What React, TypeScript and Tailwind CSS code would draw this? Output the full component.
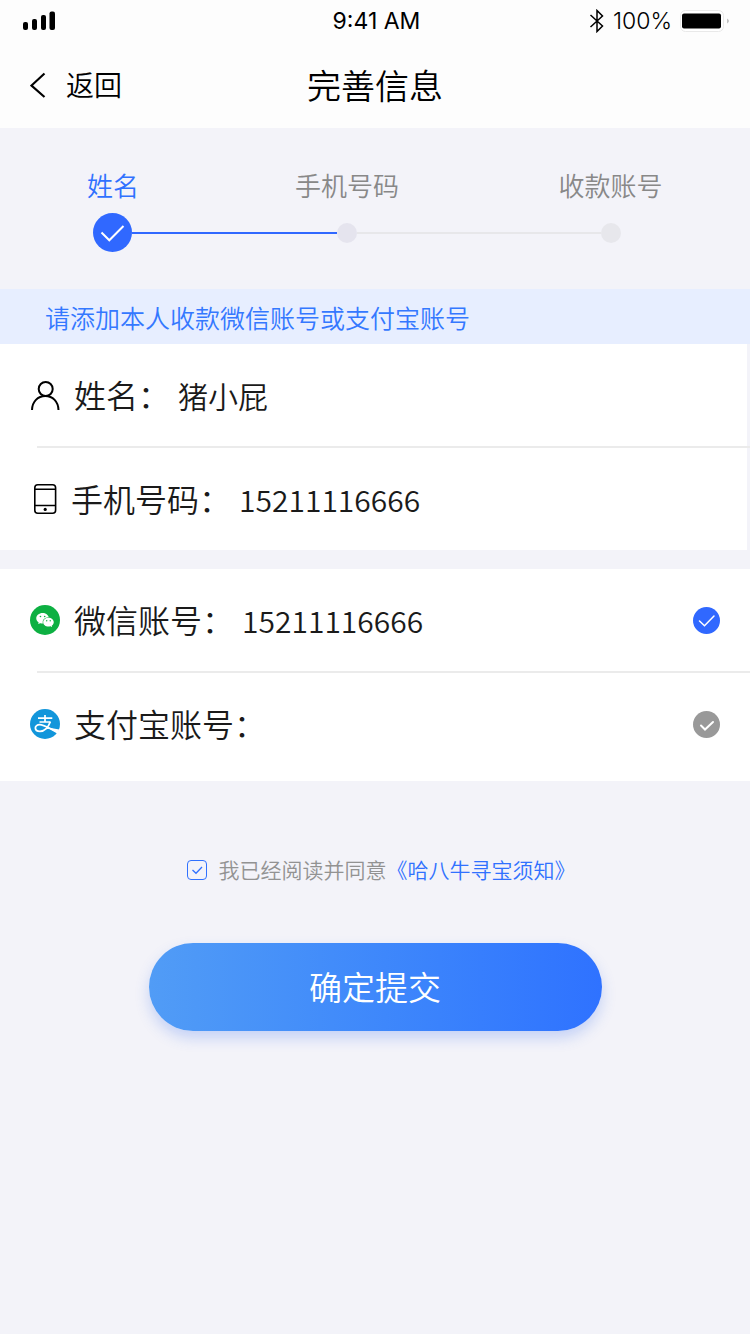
import { useState } from "react";
import type { ReactNode } from "react";
import { AiFillWechat } from "react-icons/ai";

const steps = ["姓名", "手机号码", "收款账号"];

function SignalIcon() {
  return (
    <svg className="h-5 w-8" viewBox="0 0 32 20" aria-hidden="true">
      <rect x="0" y="11" width="5" height="8" rx="2" />
      <rect x="9" y="8" width="5" height="11" rx="2" />
      <rect x="18" y="4" width="5" height="15" rx="2" />
      <rect x="26.5" y="0.5" width="5.5" height="18.5" rx="2" />
    </svg>
  );
}

function BluetoothIcon() {
  return (
    <svg className="h-6 w-4" viewBox="0 0 16 24" fill="none" stroke="black" strokeWidth="1.5" aria-hidden="true">
      <path d="M1.5 6 13.5 17 8 22.5V1.5L13.5 7 1.5 18" />
    </svg>
  );
}

function BatteryIcon() {
  return (
    <svg className="h-6 w-[50px]" viewBox="0 0 50 24" aria-hidden="true">
      <rect x="0.5" y="1.5" width="43" height="21" rx="5" fill="white" stroke="#e9e9e9" />
      <rect x="2" y="4.500" width="39" height="15" rx="2" />
      <path d="M47.500 9.500v5q2-2.500 0-5Z" fill="#888" />
    </svg>
  );
}

function PersonIcon() {
  return (
    <svg className="size-[30px] shrink-0" viewBox="0 0 30 30" fill="none" stroke="black" strokeWidth="2" aria-hidden="true">
      <circle cx="15.700" cy="9" r="7" />
      <path d="M2 30.500C2 21.500 8 16 15.300 16S28.500 21.500 28.500 30.500" />
    </svg>
  );
}

function PhoneIcon() {
  return (
    <svg className="h-[30px] w-[27px] shrink-0" viewBox="0 0 27 30" fill="none" stroke="black" strokeWidth="1.6" aria-hidden="true">
      <rect x="4.800" y="0.800" width="20.800" height="28.400" rx="3" />
      <path d="M4.800 5.200H25.600M4.800 21.500H25.600" />
      <circle cx="15.200" cy="25.400" r="1.600" fill="black" stroke="none" />
    </svg>
  );
}

function WechatIcon() {
  return (
    <span className="flex size-[30px] shrink-0 items-center justify-center rounded-full bg-[#0db042] text-white">
      <AiFillWechat className="size-5" aria-hidden="true" />
    </span>
  );
}

function AlipayIcon() {
  return (
    <svg className="size-[30px] shrink-0" viewBox="0 0 30 30" fill="none" stroke="white" aria-hidden="true">
      <circle cx="15" cy="15" r="15" fill="#1296db" stroke="none" />
      <path d="M8 9.200H22.300M9.500 13H20.500M15 6V13" strokeWidth="1.700" />
      <path
        d="M20.300 12.800C18.500 18 14.500 22.300 10 22.300C7 22.300 5.400 20.800 5.400 19C5.400 17 7.200 15.700 9.700 15.700C13.500 15.700 17 18.200 28.500 23.500"
        strokeWidth="1.800"
      />
      <path d="M16.500 18.300 29.300 20.500Q28.800 22.500 27.500 24.800Z" fill="white" stroke="none" />
    </svg>
  );
}

type FieldProps = {
  id: string;
  label: string;
  icon: ReactNode;
  type?: string;
  defaultValue?: string;
  children?: ReactNode;
};

function Field({ id, label, icon, type = "text", defaultValue = "", children }: FieldProps) {
  return (
    <div className="flex h-[102px] items-center px-[30px]">
      {icon}
      <div className="ml-3.5 flex min-w-0 flex-1 items-baseline gap-2 pb-0.5">
        <label htmlFor={id} className="shrink-0 text-[32px] leading-[48px]">
          {label}：
        </label>
        <input
          id={id}
          type={type}
          defaultValue={defaultValue}
          className="h-12 min-w-0 flex-1 bg-transparent text-[30px] outline-none"
        />
      </div>
      {children}
    </div>
  );
}

function AccountRadio({ label, checked, onSelect }: { label: string; checked: boolean; onSelect: () => void }) {
  return (
    <span className="grid size-[27px] shrink-0">
      <input
        type="radio"
        name="account"
        aria-label={label}
        checked={checked}
        onChange={onSelect}
        className="col-start-1 row-start-1 size-[27px] appearance-none rounded-full bg-[#999999] checked:bg-[#3068ff]"
      />
      <svg
        className="pointer-events-none col-start-1 row-start-1 size-[27px]"
        viewBox="0 0 27 27"
        fill="none"
        stroke="white"
        strokeLinecap="round"
        strokeWidth={checked ? 1.5 : 2}
        aria-hidden="true"
      >
        <path d={checked ? "M6.500 14 11.500 18.800 21 9" : "M8 14.500 12 18.500 20 11"} />
      </svg>
    </span>
  );
}

export default function App() {
  const [account, setAccount] = useState("wechat");
  const [agreed, setAgreed] = useState(true);

  return (
    <div className="min-h-screen bg-[#f3f3f9] font-['Noto_Sans_CJK_SC',sans-serif] font-[350] text-[#1a1a1a]">
      <header className="h-32 bg-[#fdfdfd] text-black">
        <div className="grid h-[42px] grid-cols-3 items-center pl-[23px] pr-5 font-['Inter',sans-serif] text-[23px]">
          <SignalIcon />
          <span className="text-center font-normal">9:41 AM</span>
          <div className="flex items-center justify-end gap-2">
            <BluetoothIcon />
            <span className="font-light">100%</span>
            <BatteryIcon />
          </div>
        </div>
        <div className="grid h-[86px] grid-cols-3 items-center px-[30px]">
          <button type="button" className="flex items-center gap-5 text-[28px]">
            <svg className="h-[26px] w-4" viewBox="0 0 16 26" fill="none" stroke="black" strokeWidth="2.200" aria-hidden="true">
              <path d="M14.500 1.500 1.500 13.500 14.500 25" />
            </svg>
            <span className="pb-0.5">返回</span>
          </button>
          <h1 className="pb-0.5 text-center text-[34px]">完善信息</h1>
        </div>
      </header>

      <main>
        <section aria-label="进度" className="pb-[37px] pt-[39px]">
          <ol className="grid grid-cols-[220fr_248fr_279fr] pl-[3px] text-center text-[26px] leading-9 text-[#888888]">
            {steps.map((step, i) => (
              <li key={step} className={i === 0 ? "text-[#3071ff]" : ""}>
                {step}
              </li>
            ))}
          </ol>
          <div className="mt-2.5 flex items-center pl-[93px] pr-[129px]" aria-hidden="true">
            <svg className="size-[39px]" viewBox="0 0 39 39" fill="none">
              <circle cx="19.500" cy="19.500" r="19.500" fill="#3068ff" />
              <path d="M8.500 19.500 16.300 27.300 30.500 13" stroke="white" strokeWidth="2" />
            </svg>
            <div className="h-0.5 flex-[205] bg-[#3068ff]" />
            <div className="size-5 rounded-full bg-[#e5e4ee]" />
            <div className="h-0.5 flex-[244] bg-[#e7e7ea]" />
            <div className="size-5 rounded-full bg-[#e7e7ec]" />
          </div>
        </section>

        <p className="flex h-[55px] items-center bg-[#e7eeff] pl-[45px] pt-0.5 text-[25px] text-[#3478ff]">
          请添加本人收款微信账号或支付宝账号
        </p>

        <form onSubmit={(e) => e.preventDefault()}>
          <div className="mr-[3px] bg-white">
            <Field id="name" label="姓名" icon={<PersonIcon />} defaultValue="猪小屁" />
            <div className="-mr-[3px] ml-[37px] h-0.5 bg-[#ebebeb]" />
            <Field id="phone" label="手机号码" icon={<PhoneIcon />} type="tel" defaultValue="15211116666" />
          </div>

          <div className="mt-[19px] bg-white pb-1.5">
            <Field id="wechat" label="微信账号" icon={<WechatIcon />} defaultValue="15211116666">
              <AccountRadio label="使用微信账号收款" checked={account === "wechat"} onSelect={() => setAccount("wechat")} />
            </Field>
            <div className="ml-[37px] h-0.5 bg-[#ebebeb]" />
            <Field id="alipay" label="支付宝账号" icon={<AlipayIcon />}>
              <AccountRadio label="使用支付宝账号收款" checked={account === "alipay"} onSelect={() => setAccount("alipay")} />
            </Field>
          </div>

          <div className="mt-[73px] flex h-8 items-center justify-center pl-3 text-[21px] text-[#929292]">
            <label htmlFor="agree" className="flex items-center gap-3">
              <span className="grid size-5">
                <input
                  id="agree"
                  type="checkbox"
                  checked={agreed}
                  onChange={(e) => setAgreed(e.target.checked)}
                  className="col-start-1 row-start-1 size-5 appearance-none rounded border border-[#3071ff]"
                />
                {agreed && (
                  <svg
                    className="pointer-events-none col-start-1 row-start-1 size-5"
                    viewBox="0 0 20 20"
                    fill="none"
                    stroke="#3071ff"
                    strokeWidth="1.300"
                    aria-hidden="true"
                  >
                    <path d="M5.500 10 9 13.300 15 7" />
                  </svg>
                )}
              </span>
              我已经阅读并同意
            </label>
            <a href="#notice" className="text-[#3071ff]">
              《哈八牛寻宝须知》
            </a>
          </div>

          <div className="mt-[57px] flex justify-center px-8">
            <button
              type="submit"
              className="h-[88px] w-full max-w-[453px] rounded-full bg-linear-to-r from-[#519cf6] to-[#2f72ff] text-[33px] text-white shadow-[0_7px_14px_rgba(60,110,240,0.25)]"
            >
              确定提交
            </button>
          </div>
        </form>
      </main>
    </div>
  );
}
